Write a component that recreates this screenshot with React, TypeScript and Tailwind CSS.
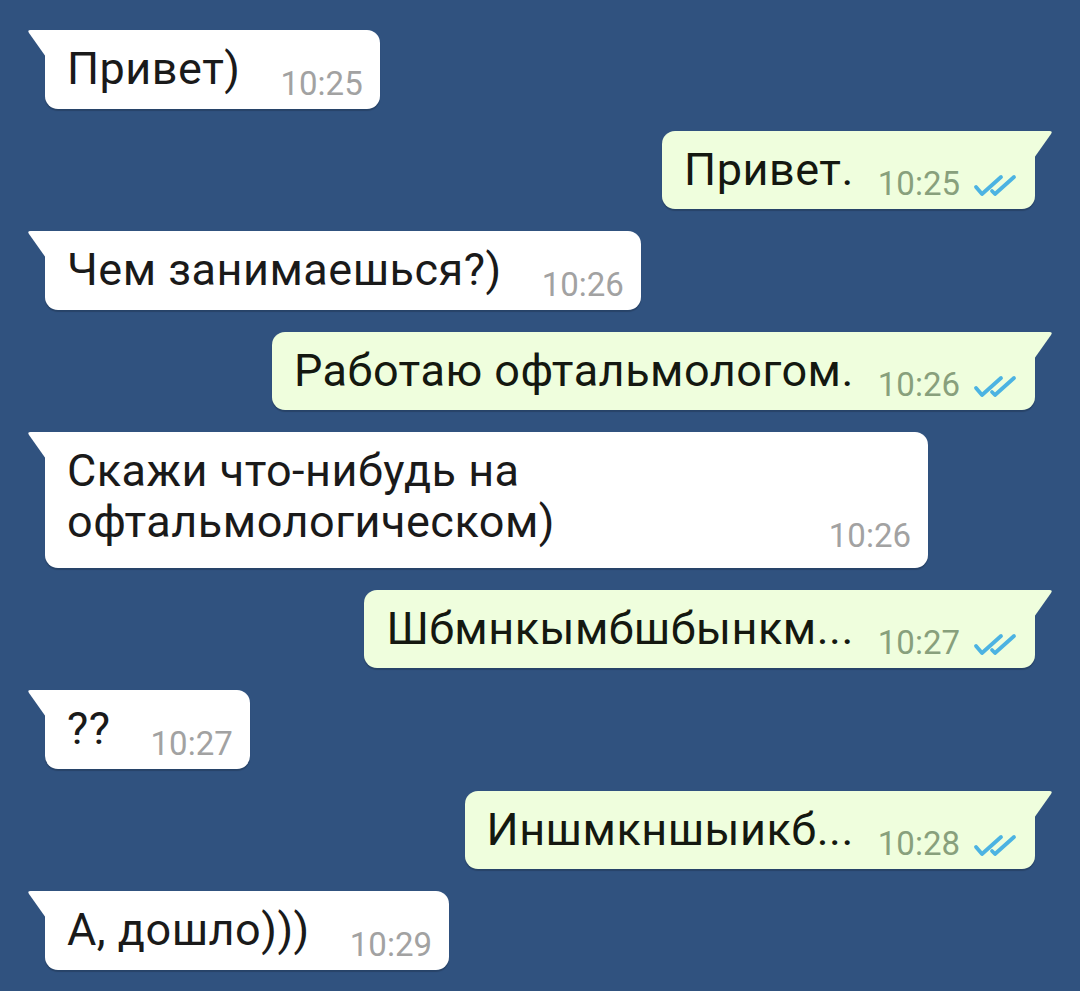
import type { ReactNode } from "react";

type Msg = { text: string; time: string; out?: boolean; multi?: boolean };

const messages: Msg[] = [
  { text: "Привет)", time: "10:25" },
  { text: "Привет.", time: "10:25", out: true },
  { text: "Чем занимаешься?)", time: "10:26" },
  { text: "Работаю офтальмологом.", time: "10:26", out: true },
  { text: "Скажи что-нибудь на офтальмологическом)", time: "10:26", multi: true },
  { text: "Шбмнкымбшбынкм...", time: "10:27", out: true },
  { text: "??", time: "10:27" },
  { text: "Иншмкншыикб...", time: "10:28", out: true },
  { text: "А, дошло)))", time: "10:29" },
];

function Tail({ out }: { out?: boolean }) {
  // little corner that sticks out of the bubble's top edge
  return (
    <svg
      width="19"
      height="27"
      viewBox="0 0 19 27"
      className={out ? "absolute top-0 -right-[18px]" : "absolute top-0 -left-[18px]"}
    >
      {out ? (
        <path d="M0 0 L15.5 0 Q19 0 17 3 L0 27 Z" fill="#effedd" />
      ) : (
        <path d="M19 0 L3.5 0 Q0 0 2 3 L19 27 Z" fill="#ffffff" />
      )}
    </svg>
  );
}

function Checks() {
  return (
    <svg width="44" height="24" viewBox="0 0 44 24" className="ml-[13px] translate-y-[3px]">
      <path d="M3 13 L9 20 L28 3" fill="none" stroke="#4cb3e2" strokeWidth="3.8" strokeLinecap="round" strokeLinejoin="round" />
      <path d="M19 17 L22 20 L41 3" fill="none" stroke="#4cb3e2" strokeWidth="3.8" strokeLinecap="round" strokeLinejoin="round" />
    </svg>
  );
}

function Bubble({ msg }: { msg: Msg }): ReactNode {
  const out = msg.out;
  return (
    <div
      className={
        "relative flex items-end pl-[22px] pt-[14px] shadow-[0_2px_1px_rgba(0,0,0,0.18)] " +
        (out
          ? "self-end mr-[45px] bg-[#effedd] rounded-[13px] rounded-tr-none pr-[18px]"
          : "self-start ml-[45px] bg-white rounded-[13px] rounded-tl-none pr-[17px]") +
        (msg.multi ? " w-[883px] pb-[20.5px]" : " pb-[14px]")
      }
    >
      <Tail out={out} />
      <div
        className={
          "flex-1 text-[45px] leading-[50.5px] tracking-[0.5px] " + (out ? "text-[#141810]" : "text-[#1a1a1a]")
        }
      >
        {msg.text}
      </div>
      <div className="flex items-end">
        <span
          className={
            "whitespace-nowrap text-[33px] leading-none translate-y-[5px] " +
            (out ? "ml-[24px] text-[#88a07c]" : "ml-[40px] text-[#a2a2a2]")
          }
        >
          {msg.time}
        </span>
        {out && <Checks />}
      </div>
    </div>
  );
}

export default function App() {
  return (
    <div
      className="min-h-[991px] w-[1080px] bg-[#30527f] pt-[30px] pb-[20px] flex flex-col gap-[22px]"
      style={{ fontFamily: "Roboto, 'Noto Sans', sans-serif" }}
    >
      {messages.map((m, i) => (
        <Bubble key={i} msg={m} />
      ))}
    </div>
  );
}
